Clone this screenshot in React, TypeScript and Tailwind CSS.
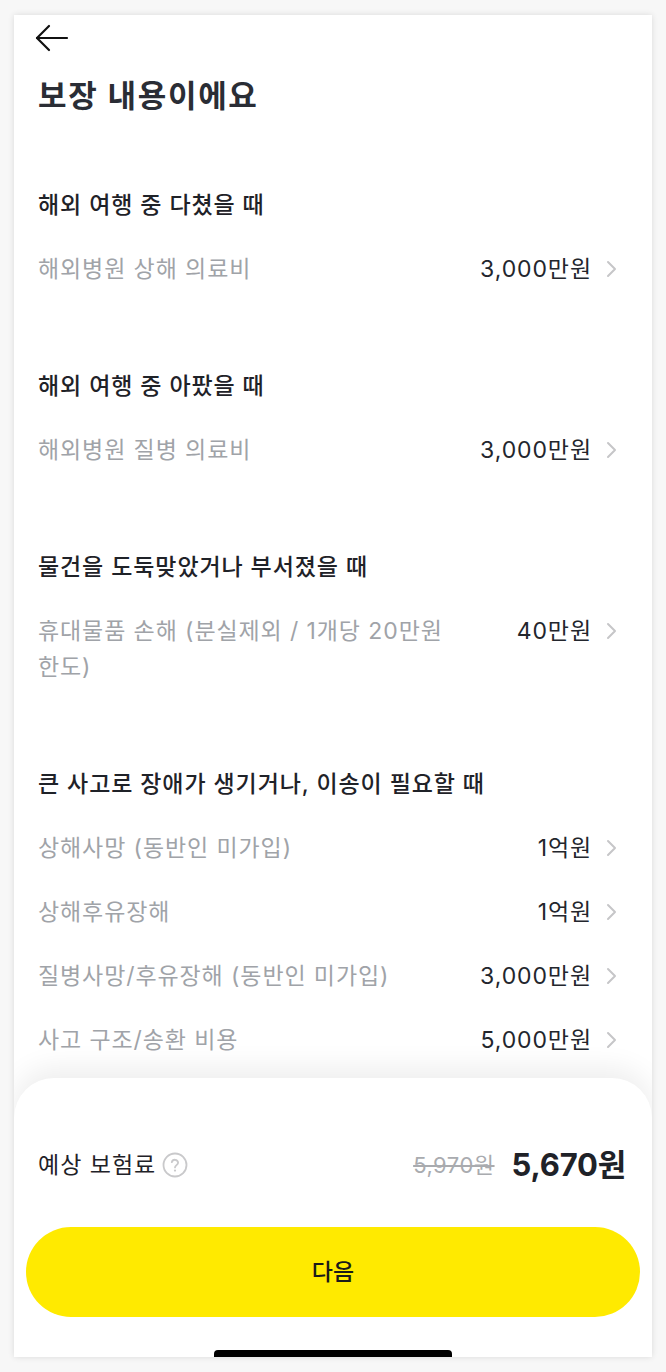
import React from "react"

type Item = { label: string; value: string }
type Section = { title: string; items: Item[] }

const sections: Section[] = [
  { title: "해외 여행 중 다쳤을 때", items: [{ label: "해외병원 상해 의료비", value: "3,000만원" }] },
  { title: "해외 여행 중 아팠을 때", items: [{ label: "해외병원 질병 의료비", value: "3,000만원" }] },
  {
    title: "물건을 도둑맞았거나 부서졌을 때",
    items: [{ label: "휴대물품 손해 (분실제외 / 1개당 20만원 한도)", value: "40만원" }],
  },
  {
    title: "큰 사고로 장애가 생기거나, 이송이 필요할 때",
    items: [
      { label: "상해사망 (동반인 미가입)", value: "1억원" },
      { label: "상해후유장해", value: "1억원" },
      { label: "질병사망/후유장해 (동반인 미가입)", value: "3,000만원" },
      { label: "사고 구조/송환 비용", value: "5,000만원" },
    ],
  },
]

function BackArrow() {
  return (
    <svg width="34" height="28" viewBox="0 0 34 28" fill="none" stroke="#111" strokeWidth="2.2" strokeLinecap="round" strokeLinejoin="round">
      <path d="M32 14H2" />
      <path d="M14 2 2 14l12 12" />
    </svg>
  )
}

function Chevron() {
  return (
    <svg width="14" height="20" viewBox="0 0 14 20" fill="none" stroke="#c6c6c8" strokeWidth="2" strokeLinecap="round" strokeLinejoin="round">
      <path d="M4 3l7 7-7 7" />
    </svg>
  )
}

function HelpIcon() {
  return (
    <svg width="26" height="26" viewBox="0 0 26 26" fill="none">
      <circle cx="13" cy="13" r="11.5" stroke="#c9c9cb" strokeWidth="1.8" />
      <path d="M9.8 10.2a3.2 3.2 0 0 1 6.3.6c0 2.1-3.1 2.6-3.1 4.6" stroke="#c9c9cb" strokeWidth="1.8" strokeLinecap="round" fill="none" />
      <circle cx="13" cy="18.6" r="1.1" fill="#c9c9cb" />
    </svg>
  )
}

function CoverageRow({ item }: { item: Item }) {
  return (
    <div className="flex items-start justify-between py-[14px]">
      <p className="max-w-[430px] break-keep text-[23px] leading-[36px] tracking-[0.9px] text-[#a0a3a8]">{item.label}</p>
      <div className="flex shrink-0 items-center gap-[12px] pl-4">
        <span className="text-[23px] leading-[36px] tracking-[0.9px] text-[#23262d]">{item.value}</span>
        <Chevron />
      </div>
    </div>
  )
}

export default function App() {
  return (
    <div
      className="min-h-[1372px] bg-[#f7f7f7] pt-[15px] pl-[14px]"
      style={{ fontFamily: '"Inter", "Noto Sans CJK KR", sans-serif' }}
    >
      <div className="relative flex h-[1342px] w-[638px] flex-col overflow-hidden bg-white shadow-[0_0_6px_rgba(0,0,0,0.12)]">
        {/* Scrollable content */}
        <div className="flex-1 overflow-hidden">
          <div className="flex h-[46px] items-center pl-[21px]">
            <BackArrow />
          </div>

          <h1 className="mt-[15px] px-6 text-[31px] leading-[40px] font-bold tracking-[1.7px] text-[#2a2d35]">보장 내용이에요</h1>

          <div className="mt-[73px] flex flex-col gap-[69px] pl-6 pr-[34px]">
            {sections.map((section) => (
              <section key={section.title}>
                <h2 className="mb-[16px] text-[23px] leading-[32px] font-medium tracking-[0.9px] text-[#1f2228]">{section.title}</h2>
                {section.items.map((item) => (
                  <CoverageRow key={item.label} item={item} />
                ))}
              </section>
            ))}
          </div>
        </div>

        {/* Bottom sheet */}
        <div className="relative z-10 flex h-[279px] shrink-0 flex-col rounded-t-[40px] bg-white pt-[67px] shadow-[0_-10px_28px_rgba(0,0,0,0.07)]">
          <div className="flex h-[40px] items-center justify-between pl-6 pr-[26px]">
            <div className="flex items-center gap-[6px]">
              <span className="text-[23px] tracking-[1px] text-[#1f2228]">예상 보험료</span>
              <HelpIcon />
            </div>
            <div className="flex items-center gap-[17px]">
              <span className="text-[22px] tracking-[0.5px] text-[#a9abaf] line-through decoration-[#a9abaf]">5,970원</span>
              <span className="text-[31px] font-bold tracking-[-0.2px] text-[#1f2228]">5,670원</span>
            </div>
          </div>

          <div className="mt-[42px] px-3">
            <button className="flex h-[90px] w-full items-center justify-center rounded-full bg-[#ffea00] text-[23px] font-medium text-[#1a1a1a]">
              다음
            </button>
          </div>

          <div className="mt-auto flex justify-center">
            <div className="h-[7px] w-[238px] rounded-t-[4px] bg-black" />
          </div>
        </div>
      </div>
    </div>
  )
}
